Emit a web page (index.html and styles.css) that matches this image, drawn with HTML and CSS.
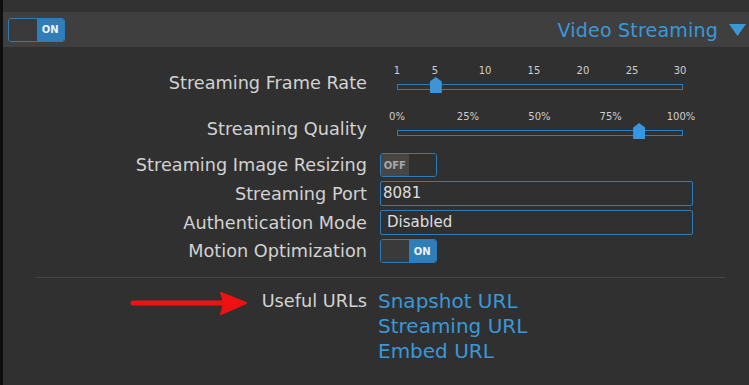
FILE: index.html
```html
<!DOCTYPE html>
<html lang="en">
<head>
  <meta charset="UTF-8" />
  <meta name="viewport" content="width=device-width, initial-scale=1" />
  <title>Video Streaming</title>
  <link rel="stylesheet" href="styles.css">
</head>
<body>
  <div class="page">
    <div class="top-strip"></div>

    <div class="section-head">
      <div class="toggle on"><span class="knob"></span><span class="state">ON</span></div>
      <div class="section-title">
        Video Streaming
        <svg class="caret" width="17" height="12" viewBox="0 0 17 12"><polygon points="0,0 17,0 8.5,12" /></svg>
      </div>
    </div>

    <div class="settings">
      <div class="label slider-label">Streaming Frame Rate</div>
      <div class="slider">
        <div class="ticks">
          <span style="left: 0%">1</span>
          <span style="left: 13.3%">5</span>
          <span style="left: 30.8%">10</span>
          <span style="left: 47.9%">15</span>
          <span style="left: 65%">20</span>
          <span style="left: 82.2%">25</span>
          <span style="left: 99%">30</span>
        </div>
        <div class="track"><span class="thumb" style="left: 13.3%"></span></div>
      </div>

      <div class="label slider-label">Streaming Quality</div>
      <div class="slider">
        <div class="ticks">
          <span style="left: 0%">0%</span>
          <span style="left: 24.8%">25%</span>
          <span style="left: 49.8%">50%</span>
          <span style="left: 74.7%">75%</span>
          <span style="left: 99.3%">100%</span>
        </div>
        <div class="track"><span class="thumb" style="left: 84.9%"></span></div>
      </div>

      <div class="label">Streaming Image Resizing</div>
      <div class="value">
        <div class="toggle off"><span class="state">OFF</span><span class="knob"></span></div>
      </div>

      <div class="label">Streaming Port</div>
      <div class="value">
        <div class="text-input">8081</div>
      </div>

      <div class="label">Authentication Mode</div>
      <div class="value">
        <div class="text-input select">Disabled</div>
      </div>

      <div class="label">Motion Optimization</div>
      <div class="value">
        <div class="toggle on"><span class="knob"></span><span class="state">ON</span></div>
      </div>
    </div>

    <div class="separator"></div>

    <div class="settings urls">
      <div class="label">Useful URLs</div>
      <div class="links">
        <a href="#">Snapshot URL</a>
        <a href="#">Streaming URL</a>
        <a href="#">Embed URL</a>
      </div>
    </div>

    <svg class="arrow" width="125" height="28" viewBox="0 0 125 28">
      <line x1="5" y1="14" x2="100" y2="14" />
      <path d="M93 4 L118 14 L93 25 Q98 14 93 4 Z" />
    </svg>
  </div>
</body>
</html>
```

FILE: styles.css
```css
* {
  box-sizing: border-box;
}

body {
  margin: 0;
  background: #303030;
  font-family: 'DejaVu Sans', Verdana, sans-serif;
  color: #d2d2d2;
}

.page {
  position: relative;
  min-height: 385px;
  border-left: 3px solid #0e0e0e;
}

.top-strip {
  height: 12px;
  background: #323232;
}

.section-head {
  height: 35px;
  background: #3f3f3f;
  display: flex;
  align-items: center;
  justify-content: space-between;
  padding: 0 3px 0 5px;
}

.section-title {
  display: flex;
  align-items: center;
  gap: 11px;
  color: #3a98d9;
  font-size: 19px;
  letter-spacing: 0.2px;
}

.caret polygon {
  fill: #3a98d9;
}

/* toggles */

.toggle {
  width: 57px;
  height: 24px;
  display: flex;
  border: 1px solid #2d7bb8;
  border-radius: 3px;
  overflow: hidden;
  font-size: 10px;
  font-weight: bold;
}

.toggle .knob,
.toggle .state {
  flex: 1;
  display: flex;
  align-items: center;
  justify-content: center;
}

.toggle.on .knob {
  background: #3a3a3a;
}

.toggle.on .state {
  background: #2f7db9;
  color: #f2f2f2;
}

.toggle.off .state {
  background: #464646;
  color: #a8a8a8;
}

.toggle.off .knob {
  background: #303030;
}

/* settings table */

.settings {
  display: grid;
  grid-template-columns: 364px 313px;
  column-gap: 13px;
  row-gap: 4px;
  padding-top: 14px;
}

.label {
  text-align: right;
  font-size: 17.7px;
  line-height: 22px;
  align-self: center;
  white-space: nowrap;
}

.label.slider-label {
  align-self: start;
  margin-top: 11px;
}

.value {
  display: flex;
  align-items: center;
}

.slider {
  height: 42px;
  padding: 4px 10px 0 17px;
}

.ticks {
  position: relative;
  height: 12px;
  font-size: 10px;
  line-height: 12px;
  color: #cfcfcf;
}

.ticks span {
  position: absolute;
  top: 0;
  transform: translateX(-50%);
  white-space: nowrap;
}

.track {
  position: relative;
  height: 6px;
  margin-top: 7px;
  border: 1px solid #2d7bb8;
}

.thumb {
  position: absolute;
  top: -8px;
  width: 12px;
  height: 16px;
  margin-left: -6px;
  background: #3996dc;
  clip-path: polygon(50% 0, 100% 28%, 100% 100%, 0 100%, 0 28%);
}

.text-input {
  width: 313px;
  height: 25px;
  border: 1px solid #2d7bb8;
  border-radius: 2px;
  padding: 0 2px;
  font-size: 15px;
  line-height: 23px;
  color: #dedede;
}

.text-input.select {
  padding-left: 6px;
}

.separator {
  height: 1px;
  background: #464646;
  margin: 14px 24px 0 33px;
}

.settings.urls {
  padding-top: 11px;
}

.urls .label {
  align-self: start;
  line-height: 25px;
}

.links {
  display: flex;
  flex-direction: column;
  margin-left: -2px;
}

.links a {
  color: #3a98d9;
  text-decoration: none;
  font-size: 20px;
  line-height: 25px;
}

/* annotation arrow */

.arrow {
  position: absolute;
  left: 125px;
  top: 289px;
}

.arrow line {
  stroke: #ee1212;
  stroke-width: 5;
  stroke-linecap: round;
}

.arrow path {
  fill: #ee1212;
  stroke: #ee1212;
  stroke-width: 2;
  stroke-linejoin: round;
}
```
